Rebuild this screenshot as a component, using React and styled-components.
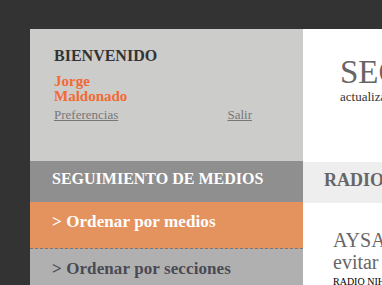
import React from 'react';
import styled, { createGlobalStyle } from 'styled-components';

const GlobalStyle = createGlobalStyle`
  html, body {
    margin: 0;
    padding: 0;
    background: #333333;
    overflow: hidden;
  }
  body {
    font-family: "Liberation Serif", Georgia, "Times New Roman", serif;
  }
`;

const Page = styled.div`
  display: flex;
  width: 1100px;
  min-height: 285px;
  padding: 29px 0 0 30px;
`;

const Sidebar = styled.aside`
  width: 273px;
  flex-shrink: 0;
  background: #cccccb;
`;

const Welcome = styled.div`
  height: 132px;
  box-sizing: border-box;
  padding: 18px 51px 0 24px;
`;

const WelcomeTitle = styled.h3`
  margin: 0 0 9px;
  font-size: 16px;
  line-height: 18px;
  font-weight: bold;
  color: #333333;
`;

const UserName = styled.div`
  font-size: 15px;
  font-weight: bold;
  line-height: 15px;
  color: #f26a35;
  width: 90px;
`;

const Links = styled.div`
  display: flex;
  justify-content: space-between;
  margin-top: 3px;
  line-height: 15px;
`;

const SmallLink = styled.a`
  font-size: 13px;
  color: #777777;
  text-decoration: underline;
`;

const SectionHeader = styled.h2`
  margin: 0;
  height: 41px;
  box-sizing: border-box;
  padding: 9px 0 0 22px;
  background: #8f8f8f;
  color: #ffffff;
  font-size: 16px;
  line-height: 18px;
  font-weight: bold;
`;

const MenuItem = styled.a`
  display: block;
  box-sizing: border-box;
  height: ${(p) => (p.$active ? '47px' : '46px')};
  padding: ${(p) => (p.$active ? '10px' : '10px')} 0 0 22px;
  background: ${(p) => (p.$active ? '#e4925e' : '#b0b0b0')};
  color: ${(p) => (p.$active ? '#ffffff' : '#4a4a55')};
  border-bottom: ${(p) => (p.$active ? '1px dashed #6c7b8a' : 'none')};
  font-size: 17px;
  line-height: 20px;
  letter-spacing: 0.1px;
  font-weight: bold;
  text-decoration: none;
`;

const Main = styled.main`
  flex: 1;
  background: #ffffff;
  white-space: nowrap;
`;

const TitleBlock = styled.div`
  height: 133px;
  box-sizing: border-box;
  padding: 26px 0 0 37px;
`;

const PageTitle = styled.h1`
  margin: 0;
  font-size: 33px;
  line-height: 34px;
  font-weight: normal;
  color: #666666;
`;

const Updated = styled.div`
  font-size: 13px;
  line-height: 15px;
  color: #333333;
`;

const Band = styled.h2`
  margin: 0;
  height: 41px;
  box-sizing: border-box;
  padding: 9px 0 0 21px;
  background: #eeeeee;
  color: #666666;
  font-size: 18px;
  line-height: 18px;
  font-weight: bold;
`;

const Article = styled.div`
  padding: 26px 0 0 30px;
`;

const ArticleTitle = styled.h3`
  margin: 0;
  font-size: 20px;
  line-height: 22px;
  font-weight: normal;
  color: #666666;
`;

const Source = styled.div`
  font-size: 10px;
  line-height: 12px;
  color: #000000;
  margin-top: 3px;
`;

export default function App() {
  return (
    <>
      <GlobalStyle />
      <Page>
        <Sidebar>
          <Welcome>
            <WelcomeTitle>BIENVENIDO</WelcomeTitle>
            <UserName>Jorge Maldonado</UserName>
            <Links>
              <SmallLink href="#">Preferencias</SmallLink>
              <SmallLink href="#">Salir</SmallLink>
            </Links>
          </Welcome>
          <SectionHeader>SEGUIMIENTO DE MEDIOS</SectionHeader>
          <MenuItem href="#" $active>&gt; Ordenar por medios</MenuItem>
          <MenuItem href="#">&gt; Ordenar por secciones</MenuItem>
        </Sidebar>
        <Main>
          <TitleBlock>
            <PageTitle>SEGUIMIENTO DE MEDIOS</PageTitle>
            <Updated>actualizado el 12/05/2011</Updated>
          </TitleBlock>
          <Band>RADIO NACIONAL</Band>
          <Article>
            <ArticleTitle>
              AYSA anunció obras para
              <br />
              evitar inundaciones
            </ArticleTitle>
            <Source>RADIO NIHUIL - 08:30</Source>
          </Article>
        </Main>
      </Page>
    </>
  );
}
